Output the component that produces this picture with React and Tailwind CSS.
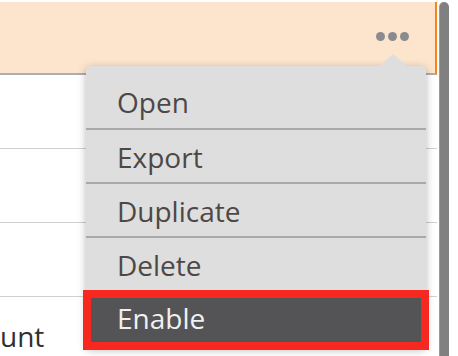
const items = ["Open", "Export", "Duplicate", "Delete"];

const App = () => {
  return (
    <div className="relative w-[458px] h-[356px] overflow-hidden bg-white font-['Open_Sans',sans-serif]">
      <div className="flex h-full pt-[2px]">
        {/* grid */}
        <div className="w-[437px] flex flex-col">
          <div className="h-[73px] shrink-0 flex items-center justify-end pr-[26px] pb-[2px] bg-[#fde4cc] border-r-2 border-r-[#f5841f] border-b-2 border-b-[#adadad]">
            <div className="flex gap-[3px]">
              <span className="w-[9px] h-[9px] rounded-full bg-[#8b8b8f]" />
              <span className="w-[9px] h-[9px] rounded-full bg-[#8b8b8f]" />
              <span className="w-[9px] h-[9px] rounded-full bg-[#8b8b8f]" />
            </div>
          </div>
          <div className="h-[74px] shrink-0 border-b border-[#d0d0d0]" />
          <div className="h-[74px] shrink-0 border-b border-[#d0d0d0]" />
          <div className="h-[74px] shrink-0 border-b border-[#d0d0d0]" />
          <div className="flex-1 pt-[25px]">
            <div className="text-[28px] leading-[28px] text-[#303030] whitespace-nowrap">
              unt
            </div>
          </div>
        </div>
        {/* scrollbar */}
        <div className="flex-1 flex pl-[2px] pr-[9px] bg-white">
          <div className="w-[10px] h-full rounded-t-[5px] bg-[#808080] border-l border-[#9a9a9a]" />
        </div>
      </div>

      {/* action menu */}
      <div className="absolute left-[86px] top-[66px] w-[340px] rounded-[5px] bg-[#dedede] pt-[10px] pb-[4px] shadow-[0_2px_8px_rgba(0,0,0,0.28)]">
        <div className="absolute top-[-12px] left-[293px] w-0 h-0 border-l-[14px] border-r-[14px] border-b-[12px] border-l-transparent border-r-transparent border-b-[#dedede]" />
        {items.map((label, i) => (
          <div
            key={label}
            className={
              i === 0
                ? "h-[52px] flex items-center pl-[31px] text-[28px] text-[#4d4846]"
                : "h-[54px] flex items-center pl-[31px] pt-[2px] border-t-2 border-[#a9a9a9] text-[28px] text-[#4d4846]"
            }
          >
            {label}
          </div>
        ))}
        <div className="relative h-[54px] flex items-center pl-[31px] border-t-2 border-[#a9a9a9] bg-[#545456] text-[28px] text-[#f0f0f0]">
          Enable
          <span className="absolute left-[-3px] right-[-3px] top-[-2px] bottom-[-6px] border-8 border-[#f6281f]" />
        </div>
      </div>
    </div>
  );
};

export default App;
